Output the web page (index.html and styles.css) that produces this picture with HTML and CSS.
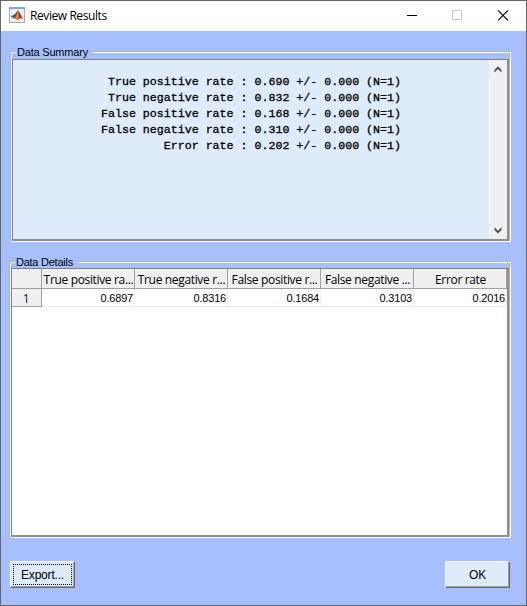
FILE: index.html
```html
<!DOCTYPE html>
<html lang="en">
<head>
<meta charset="utf-8">
<title>Review Results</title>
<link rel="stylesheet" href="styles.css">
</head>
<body>
<div class="window">
  <header class="titlebar">
    <svg class="app-icon" width="16" height="16" viewBox="0 0 16 16">
      <rect x=".5" y=".5" width="15" height="15" fill="#eceef0" stroke="#a3adb8"/>
      <rect width="16" height="2" fill="#7ba6d2"/>
      <path d="M1.5 9.2 5 7.8 7 9.6 4.6 11.6Z" fill="#397ba5"/>
      <path d="M5 7.8C7 7 7.7 4 9 3.5L7.5 8.8 4.6 11.6Z" fill="#315477"/>
      <path d="M9 3.5C10.5 4 11.7 9 14.5 12.2 12.6 10.7 11 11 8.2 13.5 7.8 11.8 6.5 11 4.6 11.6 7.2 10 8 6 9 3.5Z" fill="#d6541d"/>
      <path d="M9 4C9.8 6 9.5 10 8.3 13 7.8 11.8 7.4 11.3 6.6 11.1 8.3 9 8.5 6 9 4Z" fill="#f39a3c"/>
      <path d="M9.2 4C10.5 5.5 11.5 9 14 12 12.4 10.5 11.6 10 10.7 11Z" fill="#982719"/>
    </svg>
    <h1 class="title">Review Results</h1>
    <svg class="controls" width="120" height="30" viewBox="0 0 120 30" fill="none" shape-rendering="crispEdges">
      <path d="M1 14.5H11" stroke="#000"/>
      <rect x="46.5" y="9.5" width="9" height="9" stroke="#ccc"/>
      <path d="M92 9.3 102 19.3M102 9.3 92 19.3" stroke="#000" stroke-width="1.1" shape-rendering="auto"/>
    </svg>
  </header>
  <main class="content">
    <section class="panel summary">
      <h2 class="legend">Data Summary</h2>
      <div class="listbox">
<pre class="report"> True positive rate : 0.690 +/- 0.000 (N=1)
 True negative rate : 0.832 +/- 0.000 (N=1)
False positive rate : 0.168 +/- 0.000 (N=1)
False negative rate : 0.310 +/- 0.000 (N=1)
         Error rate : 0.202 +/- 0.000 (N=1)</pre>
        <div class="scrollbar">
          <svg width="17" height="17" viewBox="0 0 17 17"><path d="M4.5 9.7 8 6.2 11.5 9.7V12.5L8 9 4.5 12.5Z" fill="#505050"/></svg>
          <svg width="17" height="17" viewBox="0 0 17 17"><path d="M4.5 5.3 8 8.8 11.5 5.3V8.1L8 11.6 4.5 8.1Z" fill="#505050"/></svg>
        </div>
      </div>
    </section>
    <section class="panel details">
      <h2 class="legend">Data Details</h2>
      <div class="tablebox">
        <div class="row head">
          <span class="num"></span><span>True positive ra...</span><span>True negative r...</span><span>False positive r...</span><span>False negative ...</span><span>Error rate</span>
        </div>
        <div class="row data">
          <span class="num">1</span><span>0.6897</span><span>0.8316</span><span>0.1684</span><span>0.3103</span><span>0.2016</span>
        </div>
      </div>
    </section>
    <footer class="actions">
      <button class="btn focused">Export...</button>
      <button class="btn">OK</button>
    </footer>
  </main>
</div>
</body>
</html>
```
FILE: styles.css
```css
* { box-sizing: border-box; }
body { margin: 0; font-family: "Liberation Sans", Arial, sans-serif; color: #000; }
.window {
  width: 527px; height: 606px;
  border: 1px solid #666;
  background: #a6c0ff;
  display: flex; flex-direction: column;
}
.titlebar {
  height: 30px; flex: none;
  background: #fff;
  display: flex; align-items: flex-start;
  padding-left: 8px;
}
.app-icon { margin-top: 6px; }
.title {
  margin: 0 0 0 5px;
  font: 12px/30px "Open Sans", sans-serif;
  letter-spacing: -.42px;
}
.controls { margin-left: auto; }
.content { flex: 1; display: flex; flex-direction: column; }
.panel {
  position: relative;
  border: 1px solid #fff;
  box-shadow: -1px -1px 0 #b2b2b2, inset -1px 0 0 #b2b2b2;
}
.summary { margin: 21px 15px 0 10px; height: 190px; padding: 6px 1px 0 0; }
.details { margin: 20px 15px 0 9px; height: 276px; padding: 5px 1px 0 0; }
.legend {
  position: absolute; left: 4px; top: -8px;
  margin: 0; padding: 0 5px 0 1px;
  background: #a6c0ff;
  font-weight: 400; font-size: 11px; line-height: 14px;
  letter-spacing: -.25px;
  white-space: nowrap;
}
.summary .legend { width: 76px; letter-spacing: -.2px; }
.details .legend { width: 63px; height: 13px; }
.listbox {
  height: 182px;
  border: 1px solid #808080;
  border-width: 1px 2px 2px 1px;
  border-color: #808080 #8e8e8e #8e8e8e #808080;
  background: #deebfa;
  display: flex; justify-content: space-between;
}
.report {
  margin: 14px 0 0 88px;
  font: 11.64px/16px "Liberation Mono", monospace;
  -webkit-text-stroke: .3px #000;
}
.scrollbar {
  width: 18px;
  border-left: 1px solid #fff;
  background: #f0f0f0;
  display: flex; flex-direction: column; justify-content: space-between;
}
.tablebox {
  height: 269px;
  border: 1px solid #808080;
  border-width: 1px 2px 2px 1px;
  border-color: #808080 #8e8e8e #8e8e8e #808080;
  background: #fff;
}
.row { display: grid; grid-template-columns: 30px repeat(5, 93px); width: 495px; }
.row span { border-right: 1px solid #a0a0a0; border-bottom: 1px solid #a0a0a0; white-space: nowrap; }
.head span {
  height: 20px;
  background: #f0f0f0;
  font: 12px/22px "Open Sans", sans-serif;
  letter-spacing: -.34px;
  padding-left: 1px;
  text-align: center;
}
.data span {
  height: 18px;
  border-color: #ececec;
  font-size: 11px; line-height: 19px; letter-spacing: -.2px;
  text-align: right; padding-right: 1px;
}
.data .num {
  border-color: #a0a0a0;
  background: #f0f0f0; color: #400040;
  font-family: "Open Sans", sans-serif; font-size: 12px;
  text-align: center;
}
.actions { display: flex; justify-content: space-between; margin: 23px 16px 0 9px; }
.btn {
  width: 65px; height: 27px; padding: 2px 0 0;
  border: 1px solid; border-color: #fff #696969 #696969 #fff;
  box-shadow: inset -1px -1px 0 #a0a0a0, inset 1px 1px 0 #e3e3e3;
  border-radius: 0;
  background: #deebfa;
  font: 12px/23px "Liberation Sans", Arial, sans-serif;
  letter-spacing: -.2px;
  color: #000;
}
.focused { outline: 1px dotted #000; outline-offset: -4px; }
```
